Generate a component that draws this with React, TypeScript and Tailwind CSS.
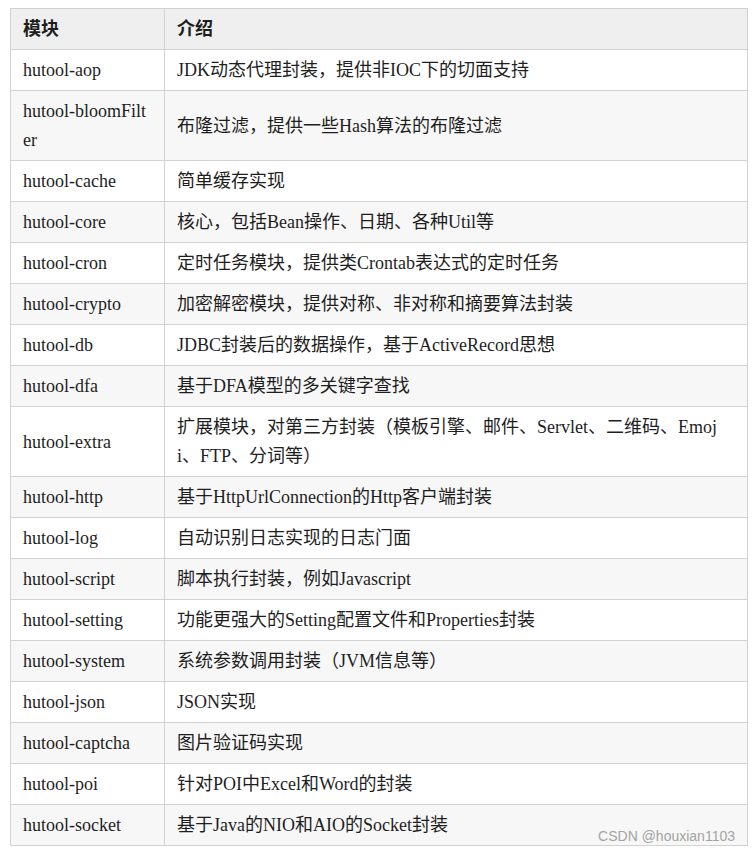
import React from 'react';

interface ModuleRow {
  name: string;
  desc: string;
}

const rows: ModuleRow[] = [
  { name: 'hutool-aop', desc: 'JDK动态代理封装，提供非IOC下的切面支持' },
  { name: 'hutool-bloomFilter', desc: '布隆过滤，提供一些Hash算法的布隆过滤' },
  { name: 'hutool-cache', desc: '简单缓存实现' },
  { name: 'hutool-core', desc: '核心，包括Bean操作、日期、各种Util等' },
  { name: 'hutool-cron', desc: '定时任务模块，提供类Crontab表达式的定时任务' },
  { name: 'hutool-crypto', desc: '加密解密模块，提供对称、非对称和摘要算法封装' },
  { name: 'hutool-db', desc: 'JDBC封装后的数据操作，基于ActiveRecord思想' },
  { name: 'hutool-dfa', desc: '基于DFA模型的多关键字查找' },
  {
    name: 'hutool-extra',
    desc: '扩展模块，对第三方封装（模板引擎、邮件、Servlet、二维码、Emoji、FTP、分词等）',
  },
  { name: 'hutool-http', desc: '基于HttpUrlConnection的Http客户端封装' },
  { name: 'hutool-log', desc: '自动识别日志实现的日志门面' },
  { name: 'hutool-script', desc: '脚本执行封装，例如Javascript' },
  { name: 'hutool-setting', desc: '功能更强大的Setting配置文件和Properties封装' },
  { name: 'hutool-system', desc: '系统参数调用封装（JVM信息等）' },
  { name: 'hutool-json', desc: 'JSON实现' },
  { name: 'hutool-captcha', desc: '图片验证码实现' },
  { name: 'hutool-poi', desc: '针对POI中Excel和Word的封装' },
  { name: 'hutool-socket', desc: '基于Java的NIO和AIO的Socket封装' },
];

const cell = 'border-r border-b border-[#d2d2d2] pl-[12px] pr-[12px] pt-[6px] pb-[5px] break-all';

const App: React.FC = () => {
  return (
    <div className="min-h-[852px] bg-white pt-[8px] pl-[10px]">
      <div className="relative w-[738px] border-t border-l border-[#d2d2d2] font-['Liberation_Serif','Noto_Sans_CJK_SC',serif] text-[18px] leading-[29px] text-[#1e1e1e]">
        {/* Header */}
        <div className="grid grid-cols-[154px_1fr] bg-[#efefef] font-bold">
          <div className={cell}>模块</div>
          <div className={cell}>介绍</div>
        </div>

        {rows.map((row, index) => (
          <div
            key={row.name}
            className={`grid grid-cols-[154px_1fr] ${index % 2 === 1 ? 'bg-[#f7f7f7]' : 'bg-white'}`}
          >
            <div className={`${cell} flex items-center`}>
              <span>{row.name}</span>
            </div>
            <div className={`${cell} flex items-center`}>
              <span>{row.desc}</span>
            </div>
          </div>
        ))}

        {/* Watermark */}
        <div className="absolute right-[13px] bottom-[1px] font-['Liberation_Sans',Arial,sans-serif] text-[14px] leading-[18px] text-[#a3a3a3]">
          CSDN @houxian1103
        </div>
      </div>
    </div>
  );
};

export default App;
